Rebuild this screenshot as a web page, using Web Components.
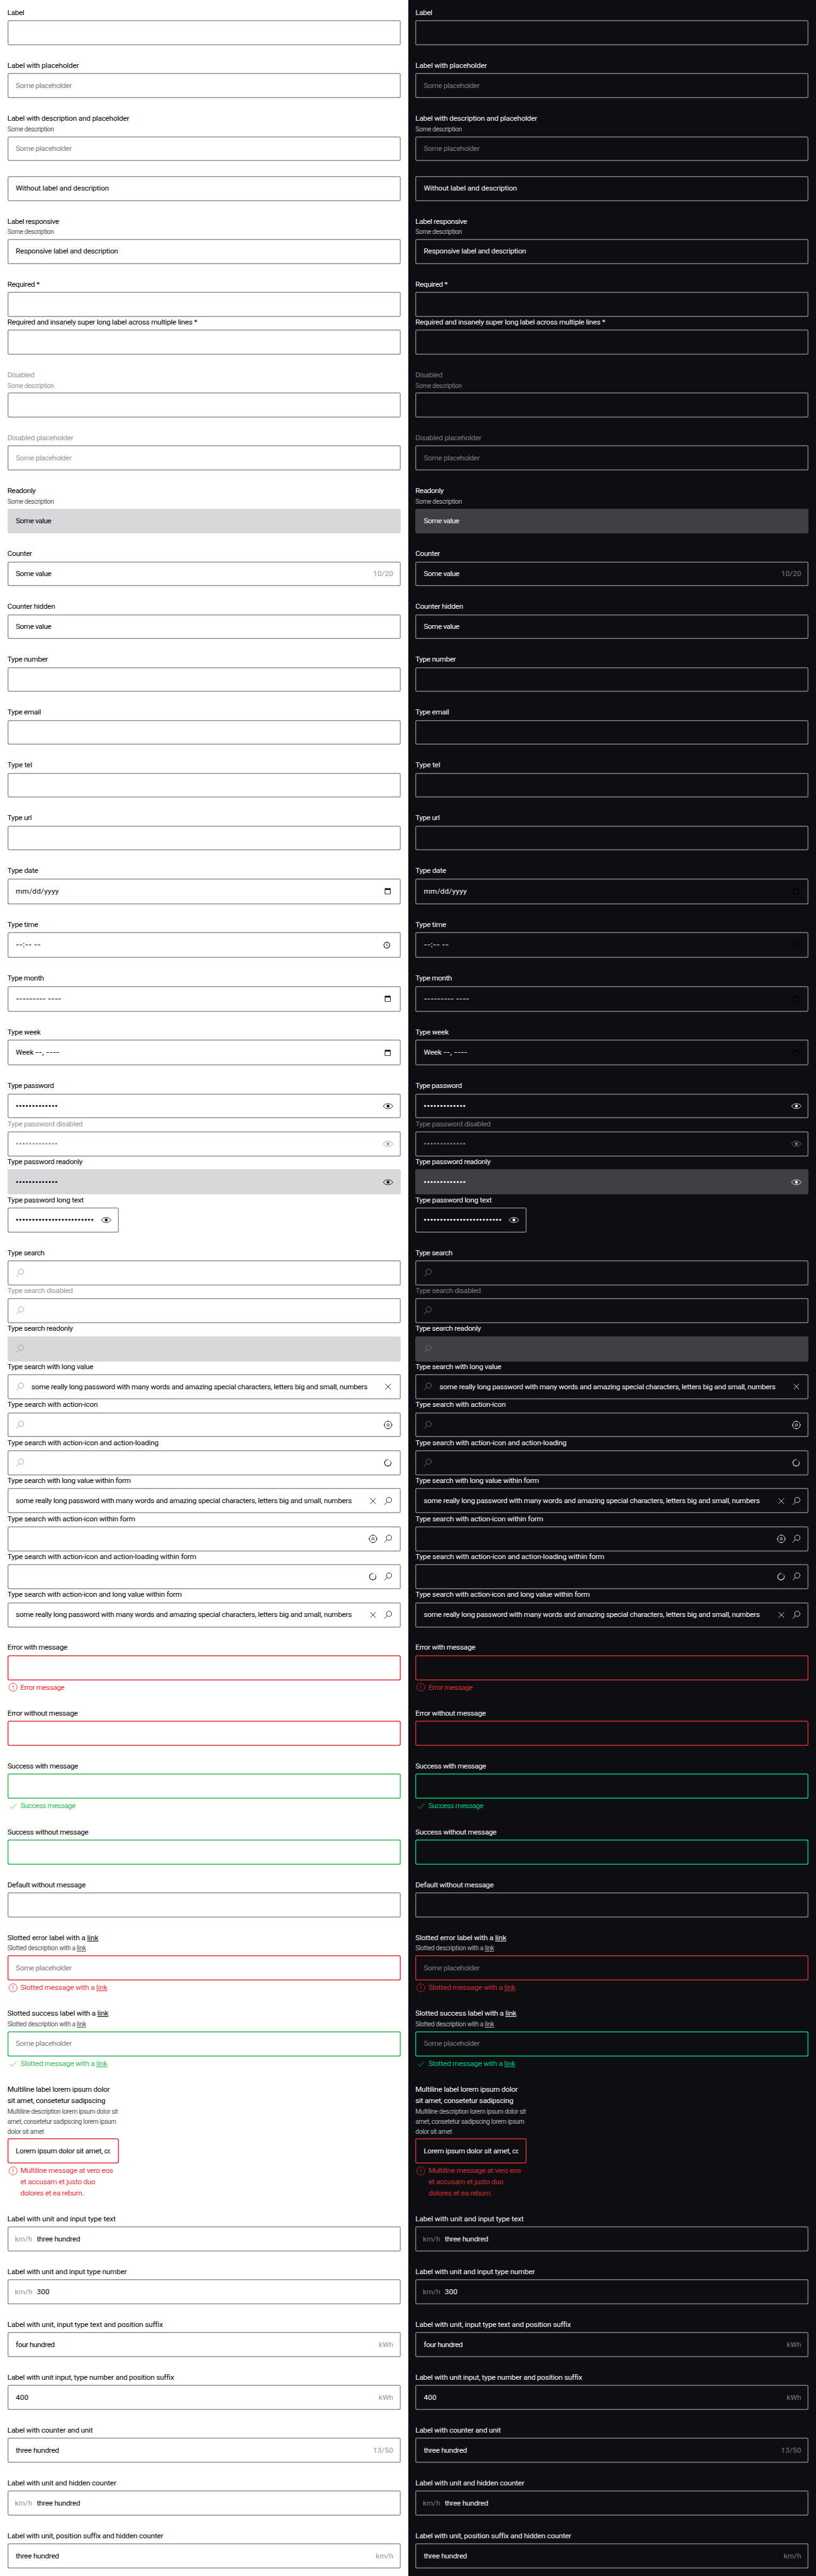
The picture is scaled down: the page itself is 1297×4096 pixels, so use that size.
<!DOCTYPE html>
<html lang="en">
<head>
<meta charset="utf-8">
<title>Text field states</title>
<style>
  /* 1rem = 10 design pixels */
  html { font-size: 7.3695px; }
  body { margin: 0; background: #fff; }
</style>
</head>
<body>
<field-overview></field-overview>

<template id="fields">
  <field-group><text-field label="Label" lw="36"></text-field></field-group>
  <field-group><text-field label="Label with placeholder" lw="154" placeholder="Some placeholder" vw="120.6"></text-field></field-group>
  <field-group><text-field label="Label with description and placeholder" lw="262.6" description="Some description" dw="100" placeholder="Some placeholder" vw="120.6"></text-field></field-group>
  <field-group><text-field value="Without label and description" vw="201"></text-field></field-group>
  <field-group><text-field label="Label responsive" lw="111" description="Some description" dw="100" value="Responsive label and description" vw="220.5"></text-field></field-group>
  <field-group>
    <text-field label="Required *" lw="69"></text-field>
    <text-field label="Required and insanely super long label across multiple lines *" lw="409"></text-field>
  </field-group>
  <field-group><text-field disabled label="Disabled" lw="58" description="Some description" dw="100"></text-field></field-group>
  <field-group><text-field disabled label="Disabled placeholder" lw="142" placeholder="Some placeholder" vw="120.6"></text-field></field-group>
  <field-group><text-field readonly label="Readonly" lw="60.6" description="Some description" dw="100" value="Some value" vw="76.3"></text-field></field-group>
  <field-group><text-field label="Counter" lw="52.7" value="Some value" vw="76.3" suffix="10/20" sw="43"></text-field></field-group>
  <field-group><text-field label="Counter hidden" lw="102.7" value="Some value" vw="76.3"></text-field></field-group>
  <field-group><text-field label="Type number" lw="87"></text-field></field-group>
  <field-group><text-field label="Type email" lw="72.4"></text-field></field-group>
  <field-group><text-field label="Type tel" lw="53.3"></text-field></field-group>
  <field-group><text-field label="Type url" lw="52.2"></text-field></field-group>
  <field-group><text-field tall label="Type date" lw="66.2" value="mm/dd/yyyy" vw="93" actions="calendar"></text-field></field-group>
  <field-group><text-field tall label="Type time" lw="66.2" value="--:-- --" vw="54" actions="clock"></text-field></field-group>
  <field-group><text-field tall label="Type month" lw="78.6" value="--------- ----" vw="98" actions="calendar"></text-field></field-group>
  <field-group><text-field tall label="Type week" lw="71.3" value="Week --, ----" vw="94" actions="calendar"></text-field></field-group>
  <field-group>
    <text-field label="Type password" lw="100" value="•••••••••••••" vw="91.6" actions="eye"></text-field>
    <text-field disabled label="Type password disabled" lw="162" value="•••••••••••••" vw="91.6" actions="eye"></text-field>
    <text-field readonly label="Type password readonly" lw="161.6" value="•••••••••••••" vw="91.6" actions="eye"></text-field>
    <text-field narrow label="Type password long text" lw="164.4" value="••••••••••••••••••••••••" vw="169.2" actions="eye"></text-field>
  </field-group>
  <field-group>
    <text-field search label="Type search" lw="79.7"></text-field>
    <text-field search disabled label="Type search disabled" lw="141"></text-field>
    <text-field search readonly label="Type search readonly" lw="141"></text-field>
    <text-field search label="Type search with long value" lw="185" value="some really long password with many words and amazing special characters, letters big and small, numbers" vw="724.5" actions="close"></text-field>
    <text-field search label="Type search with action-icon" lw="194.7" actions="locate"></text-field>
    <text-field search label="Type search with action-icon and action-loading" lw="326" actions="spinner"></text-field>
    <text-field label="Type search with long value within form" lw="266" value="some really long password with many words and amazing special characters, letters big and small, numbers" vw="724.5" actions="close search"></text-field>
    <text-field label="Type search with action-icon within form" lw="275.5" actions="locate search"></text-field>
    <text-field label="Type search with action-icon and action-loading within form" lw="407.4" actions="spinner search"></text-field>
    <text-field label="Type search with action-icon and long value within form" lw="376" value="some really long password with many words and amazing special characters, letters big and small, numbers" vw="724.5" actions="close search"></text-field>
  </field-group>
  <field-group><text-field state="error" label="Error with message" lw="129" message="Error message" mw="95"></text-field></field-group>
  <field-group><text-field state="error" label="Error without message" lw="151.5"></text-field></field-group>
  <field-group><text-field state="success" label="Success with message" lw="152" message="Success message" mw="118.4"></text-field></field-group>
  <field-group><text-field state="success" label="Success without message" lw="174.5"></text-field></field-group>
  <field-group><text-field label="Default without message" lw="168.4"></text-field></field-group>
  <field-group><text-field state="error" label="Slotted error label with a [link]" lw="196" description="Slotted description with a [link]" dw="169.5" placeholder="Some placeholder" vw="120.6" message="Slotted message with a [link]" mw="187.4"></text-field></field-group>
  <field-group><text-field state="success" label="Slotted success label with a [link]" lw="217.7" description="Slotted description with a [link]" dw="169.5" placeholder="Some placeholder" vw="120.6" message="Slotted message with a [link]" mw="187.4"></text-field></field-group>
  <field-group><text-field narrow state="error"
    label="Multiline label lorem ipsum dolor|sit amet, consetetur sadipscing" lw="220.5|211"
    description="Multiline description lorem ipsum dolor sit|amet, consetetur sadipscing lorem ipsum|dolor sit amet" dw="238|234.6|78.6"
    value="Lorem ipsum dolor sit amet, co" vw="207.5"
    message="Multiline message at vero eos|et accusam et justo duo|dolores et ea rebum." mw="199.8|161.6|137"></text-field></field-group>
  <field-group><text-field label="Label with unit and input type text" lw="233.5" prefix="km/h" pw="37.5" value="three hundred" vw="93.2"></text-field></field-group>
  <field-group><text-field label="Label with unit and input type number" lw="257.6" prefix="km/h" pw="37.5" value="300" vw="27.6"></text-field></field-group>
  <field-group><text-field label="Label with unit, input type text and position suffix" lw="334" value="four hundred" vw="83.6" suffix="kWh" sw="31"></text-field></field-group>
  <field-group><text-field label="Label with unit input, type number and position suffix" lw="358" value="400" vw="27.6" suffix="kWh" sw="31"></text-field></field-group>
  <field-group><text-field label="Label with counter and unit" lw="184" value="three hundred" vw="93.2" suffix="13/50" sw="43.4"></text-field></field-group>
  <field-group><text-field label="Label with unit and hidden counter" lw="234.6" prefix="km/h" pw="37.5" value="three hundred" vw="93.2"></text-field></field-group>
  <field-group><text-field label="Label with unit, position suffix and hidden counter" lw="334.5" value="three hundred" vw="93.2" suffix="km/h" sw="37.5"></text-field></field-group>
</template>

<script>
const REM = 7.3695;

const ICONS = {
  eye: '<path d="M1.3 12Q5.5 6.4 12 6.4T22.7 12Q18.5 17.6 12 17.6T1.3 12Z"/><circle cx="12" cy="12" r="3.1" fill="currentColor" stroke="none"/>',
  close: '<path d="M6 6 18 18M18 6 6 18"/>',
  locate: '<circle cx="12" cy="12" r="8"/><circle cx="12" cy="12" r="2.6"/><path stroke-width="1.5" d="M12 2.6V4.4M12 19.6V21.4M2.6 12H4.4M19.6 12H21.4"/>',
  spinner: '<path stroke-width="1.4" d="M11.5 5.2A7 7 0 1 0 18.5 12.2"/><path stroke-width="1.2" opacity=".4" d="M11.5 5.2A7 7 0 0 1 17 8"/><path stroke-width="1.3" opacity=".75" d="M17 8A7 7 0 0 1 18.5 12.2"/>',
  search: '<circle cx="14" cy="9.6" r="5.7"/><path d="M9.9 13.7 4.3 20"/>',
  calendar: '<path fill="currentColor" stroke="none" fill-rule="evenodd" d="M6.6 5H7.9V6.2H14.3V5H15.6V6.2H16.3Q17.5 6.2 17.5 7.4V17.6Q17.5 18.8 16.3 18.8H6Q4.8 18.8 4.8 17.6V7.4Q4.8 6.2 6 6.2H6.6ZM6.1 9.6V17.6H16.2V9.6Z"/>',
  clock: '<circle cx="9.3" cy="12" r="6.4" stroke-width="1.4"/><path d="M9.1 8.2V12.2L12.3 14.3"/>',
  error: '<circle cx="12" cy="12" r="8.7"/><path stroke-width="1.4" d="M12 7.4V13.4M12 15V16.6"/>',
  success: '<path d="M5 12.2 9.7 17.2 19.3 7"/>'
};

/* Line glyph on a 24 unit grid */
customElements.define('field-icon', class extends HTMLElement {
  constructor() { super(); this.attachShadow({ mode: 'open' }); }
  connectedCallback() {
    this.shadowRoot.innerHTML = `<style>
      :host { display: block; flex: none; width: 2.4rem; height: 2.4rem; }
      svg { display: block; width: 100%; height: 100%; }
    </style><svg viewBox="0 0 24 24" fill="none" stroke="currentColor" stroke-width="1.15">${ICONS[this.getAttribute('name')]}</svg>`;
  }
});

/* One line of text, tracked so that it sets to the given width */
customElements.define('text-line', class extends HTMLElement {
  constructor() {
    super();
    this.attachShadow({ mode: 'open' }).innerHTML =
      '<style>:host{display:block;width:max-content;white-space:pre;margin:.35px 0 -.35px}</style><slot></slot>';
  }
  connectedCallback() {
    const target = parseFloat(this.getAttribute('w')) * REM / 10;
    if (!target) return;
    const natural = this.getBoundingClientRect().width;
    this.style.letterSpacing = ((target - natural) / this.textContent.length).toFixed(4) + 'px';
  }
});

customElements.define('text-field', class extends HTMLElement {
  constructor() { super(); this.attachShadow({ mode: 'open' }); }
  lines(name, widthName) {
    const widths = (this.getAttribute(widthName) || '').split('|');
    return this.getAttribute(name).split('|').map((t, i) =>
      `<text-line w="${widths[i]}">${t
        .replace(/\[(.+?)\]/, '<u>$1</u>')
        .replace(/--[-:, ]*/, '<span class="dashes">$&</span>')
        .replace(/•+/, '<span class="dots">$&</span>')}</text-line>`).join('');
  }
  connectedCallback() {
    const has = n => this.hasAttribute(n);
    const state = this.getAttribute('state');
    const icons = (this.getAttribute('actions') || '').split(' ').filter(Boolean);
    this.shadowRoot.innerHTML = `<style>
      :host { display: block; --line: var(--border); color: var(--text); }
      :host([narrow]) { width: 24rem; }
      :host([state=error]) { --line: var(--error); --tone: var(--error); --glyph: var(--error); }
      :host([state=success]) { --line: var(--success); --tone: var(--success); --glyph: var(--check); }
      .label { line-height: 2.4rem; }
      .description { font-size: 1.4rem; line-height: 2.178rem; color: var(--description); }
      .box { box-sizing: border-box; display: flex; align-items: center; height: 5.4rem; margin-top: 2.953125px;
             padding: 0 1.6rem 0 1.8rem; border-radius: .4rem; box-shadow: inset 0 0 0 .2rem var(--line); }
      :host(:not([label])) .box { margin-top: 0; }
      :host([tall]) .box { height: 5.6rem; }
      :host([readonly]) .box { background: var(--readonly); box-shadow: none; }
      .value { flex: 1; min-width: 0; overflow: hidden; height: 2.4rem; line-height: 2.4rem; margin-right: .2rem; }
      .placeholder { color: var(--placeholder); }
      .dashes { font-family: Inter, sans-serif; line-height: 1; }
      .dots { font-family: "Liberation Sans", sans-serif; line-height: 1; }
      .unit { color: var(--unit); line-height: 2.4rem; }
      .prefix { margin: 0 1rem 0 -.2rem; }
      .lead { color: var(--unit); margin: 0 1.3rem 0 -.3rem; }
      .actions { display: flex; gap: .8rem; margin: 0 -.1rem 0 .9rem; }
      :host([tall]) .actions { color: #000; }
      :host([disabled]), :host([disabled]) .description, :host([disabled]) .placeholder { color: var(--disabled); }
      .message { display: flex; gap: .4rem; margin-top: .4rem; line-height: 2.4rem; color: var(--tone); }
      .message field-icon { color: var(--glyph); }
      u { text-decoration-thickness: from-font; text-underline-offset: .2rem; }
    </style>
    ${has('label') ? `<div class="label">${this.lines('label', 'lw')}</div>` : ''}
    ${has('description') ? `<div class="description">${this.lines('description', 'dw')}</div>` : ''}
    <div class="box">
      ${has('search') ? '<field-icon class="lead" name="search"></field-icon>' : ''}
      ${has('prefix') ? `<div class="unit prefix">${this.lines('prefix', 'pw')}</div>` : ''}
      <div class="value">${has('value') ? this.lines('value', 'vw')
        : has('placeholder') ? `<div class="placeholder">${this.lines('placeholder', 'vw')}</div>` : ''}</div>
      ${has('suffix') ? `<div class="unit">${this.lines('suffix', 'sw')}</div>` : ''}
      ${icons.length ? `<div class="actions">${icons.map(n => `<field-icon name="${n}"></field-icon>`).join('')}</div>` : ''}
    </div>
    ${has('message') ? `<div class="message"><field-icon name="${state}"></field-icon><div>${this.lines('message', 'mw')}</div></div>` : ''}`;
  }
});

/* Vertical padding is a multiple of 1/64 px, so long columns do not drift */
customElements.define('field-group', class extends HTMLElement {
  constructor() {
    super();
    this.attachShadow({ mode: 'open' }).innerHTML =
      '<style>:host{display:flex;flex-direction:column;padding:11.796875px 1.6rem}</style><slot></slot>';
  }
});

customElements.define('theme-panel', class extends HTMLElement {
  constructor() { super(); this.attachShadow({ mode: 'open' }); }
  connectedCallback() {
    this.shadowRoot.innerHTML = `<style>
      :host { display: block; flex: 1; min-width: 0; background: var(--bg);
        font: 1.6rem Roboto, "Liberation Sans", sans-serif;
        --bg: #fff; --text: #010205; --description: #535457; --placeholder: #7c7d80; --unit: #949598;
        --disabled: #949598; --border: #949598; --readonly: #d8d8db;
        --error: #e5303a; --success: #2fb857; --check: #2fb857; }
      :host([theme=dark]) {
        --bg: #0e0e12; --text: #fbfcff; --description: #b0b1b5; --placeholder: #7c7d82; --unit: #7c7d82;
        --disabled: #7c7d82; --border: #7c7d82; --readonly: #404044;
        --error: #cb302f; --success: #00c77b; --check: #2fb04e; }
    </style>`;
    this.shadowRoot.append(document.getElementById('fields').content.cloneNode(true));
  }
});

customElements.define('field-overview', class extends HTMLElement {
  constructor() { super(); this.attachShadow({ mode: 'open' }); }
  connectedCallback() {
    this.shadowRoot.innerHTML = `<style>:host{display:flex;height:4096px;overflow:hidden}</style>
      <theme-panel theme="light"></theme-panel><theme-panel theme="dark"></theme-panel>`;
  }
});
</script>
</body>
</html>
